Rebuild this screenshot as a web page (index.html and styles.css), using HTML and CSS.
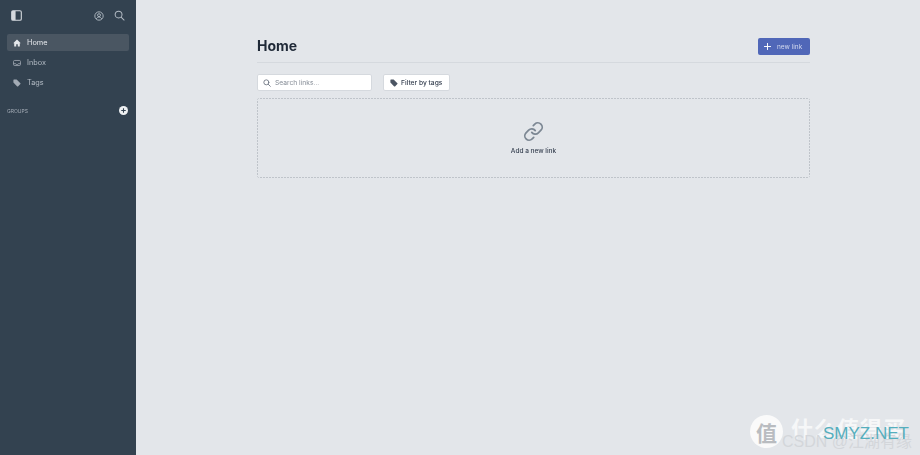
FILE: index.html
```html
<!DOCTYPE html>
<html lang="en">
<head>
    <meta charset="UTF-8">
    <meta name="viewport" content="width=device-width, initial-scale=1.0">
    <title>Home</title>
    <link rel="stylesheet" href="styles.css">
</head>
<body>
    <aside class="sidebar">
        <div class="sidebar-top">
            <svg class="icon-panel" width="11" height="11" viewBox="0 0 12 12">
                <rect x="0.75" y="0.75" width="10.5" height="10.5" rx="1.5" fill="none" stroke="#d5d9de" stroke-width="1.2"/>
                <path d="M1 1h4v10H1z" fill="#d5d9de"/>
            </svg>
            <div class="top-actions">
                <svg width="10" height="10" viewBox="0 0 24 24" fill="none" stroke="#b4bcc5" stroke-width="2.2">
                    <circle cx="12" cy="12" r="10"/>
                    <circle cx="12" cy="10" r="3.5"/>
                    <path d="M5.5 19c1.500-3 3.800-4.500 6.500-4.500s5 1.500 6.500 4.500"/>
                </svg>
                <svg width="11" height="11" viewBox="0 0 24 24" fill="none" stroke="#b4bcc5" stroke-width="2.2" stroke-linecap="round">
                    <circle cx="10" cy="10" r="7.500"/>
                    <path d="M16 16l6 6"/>
                </svg>
            </div>
        </div>

        <nav class="nav">
            <a class="nav-item active">
                <svg width="8" height="8" viewBox="0 0 20 20" fill="#e5e8ec"><path d="M10 1.500L.5 10.500H3V18.500h5v-5.500h4v5.500h5V10.500h2.500z"/></svg>
                Home
            </a>
            <a class="nav-item">
                <svg width="8" height="8" viewBox="0 0 22 20" fill="none" stroke="#a3abb5" stroke-width="2.200"><rect x="1.500" y="3" width="19" height="14" rx="3"/><path d="M1.500 12h6l1.500 2h4l1.500-2h6"/></svg>
                Inbox
            </a>
            <a class="nav-item">
                <svg width="8" height="8" viewBox="0 0 20 20" fill="#a3abb5"><path d="M1 2.500A1.500 1.500 0 0 1 2.500 1H9l9.500 9.500a1.500 1.500 0 0 1 0 2L12.500 18.500a1.500 1.500 0 0 1-2 0L1 9z"/></svg>
                Tags
            </a>
        </nav>

        <div class="groups">
            <span class="groups-title">GROUPS</span>
            <svg width="9" height="9" viewBox="0 0 20 20"><circle cx="10" cy="10" r="10" fill="#eef0f2"/><path d="M10 5v10M5 10h10" stroke="#334250" stroke-width="2.400"/></svg>
        </div>
    </aside>

    <main class="main">
        <div class="content">
            <header class="page-head">
                <h1>Home</h1>
                <button class="btn-new">
                    <svg width="7" height="7" viewBox="0 0 16 16"><path d="M8 1v14M1 8h14" stroke="#fff" stroke-width="2.200" stroke-linecap="round"/></svg>
                    new link
                </button>
            </header>

            <div class="toolbar">
                <div class="search">
                    <svg width="8" height="8" viewBox="0 0 24 24" fill="none" stroke="#6b7280" stroke-width="2.600" stroke-linecap="round"><circle cx="10" cy="10" r="7.500"/><path d="M16 16l6 6"/></svg>
                    <span>Search links...</span>
                </div>
                <button class="btn-filter">
                    <svg width="8" height="8" viewBox="0 0 20 20" fill="#4b5563"><path d="M1 2.500A1.500 1.500 0 0 1 2.500 1H9l9.500 9.500a1.500 1.500 0 0 1 0 2L12.500 18.500a1.500 1.500 0 0 1-2 0L1 9z"/></svg>
                    Filter by tags
                </button>
            </div>

            <div class="empty">
                <svg width="21" height="21" viewBox="0 0 24 24" fill="none" stroke="#7c8793" stroke-width="2" stroke-linecap="round" stroke-linejoin="round">
                    <path d="M10 13a5 5 0 0 0 7.540.54l3-3a5 5 0 0 0-7.070-7.070l-1.720 1.710"/>
                    <path d="M14 11a5 5 0 0 0-7.540-.54l-3 3a5 5 0 0 0 7.070 7.070l1.710-1.710"/>
                </svg>
                <span>Add a new link</span>
            </div>
        </div>
    </main>

    <div class="watermark">
        <span class="wm-badge">值</span>
        <span class="wm-text">什么值得买</span>
        <span class="wm-csdn">CSDN @江湖有缘</span>
        <span class="wm-smyz">SMYZ.NET</span>
    </div>
</body>
</html>
```

FILE: styles.css
```css
* {
    box-sizing: border-box;
}

body {
    margin: 0;
    height: 455px;
    display: flex;
    overflow: hidden;
    background-color: #e3e6ea;
    font-family: Inter, "Liberation Sans", sans-serif;
    color: #1f2937;
}

/* Sidebar */
.sidebar {
    width: 136px;
    flex-shrink: 0;
    background-color: #334250;
    padding: 9px 11px 0 7px;
}

.sidebar-top {
    height: 13px;
    display: flex;
    align-items: center;
    justify-content: space-between;
    padding: 0 0 0 4px;
    filter: blur(0.3px);
}

.top-actions {
    display: flex;
    align-items: center;
    gap: 10px;
}

.nav {
    margin: 12px -4px 0 0;
    display: flex;
    flex-direction: column;
    gap: 3px;
}

.nav-item {
    height: 17px;
    display: flex;
    align-items: center;
    gap: 6px;
    padding-left: 6px;
    border-radius: 2px;
    font-size: 7.300px;
    color: #b4bcc5;
    filter: blur(0.3px);
}

.nav-item.active {
    background-color: #4a5662;
    color: #e5e8ec;
}

.groups {
    margin: 15px -3px 0 0;
    display: flex;
    align-items: center;
    justify-content: space-between;
    filter: blur(0.3px);
}

.groups-title {
    font-size: 5px;
    color: #a3abb5;
}

/* Main */
.main {
    flex: 1;
    padding: 38px 0 0 121px;
}

.content {
    width: 553px;
    filter: blur(0.3px);
}

.page-head {
    height: 25px;
    display: flex;
    align-items: flex-start;
    justify-content: space-between;
    border-bottom: 1px solid #d5d9de;
}

h1 {
    margin: 0;
    font-size: 14px;
    line-height: 16px;
    font-weight: 700;
}

.btn-new {
    width: 52px;
    height: 17px;
    display: flex;
    align-items: center;
    gap: 6px;
    padding: 0 0 0 6px;
    border: none;
    border-radius: 2px;
    background-color: #5067b8;
    color: #d3d9ee;
    font-family: inherit;
    font-size: 6.500px;
}

.toolbar {
    margin-top: 11px;
    display: flex;
    gap: 11px;
}

.search,
.btn-filter {
    height: 17px;
    display: flex;
    align-items: center;
    background-color: #fff;
    border: 1px solid #d5d9de;
    border-radius: 2px;
    font-family: inherit;
    font-size: 6.700px;
}

.search {
    width: 115px;
    gap: 4px;
    padding-left: 5px;
    color: #858c96;
}

.btn-filter {
    width: 67px;
    gap: 3px;
    padding: 0 0 0 6px;
    font-weight: 500;
    color: #374151;
}

/* Fine dotted outline, finer than a 1px dashed border draws */
.empty {
    margin-top: 7px;
    height: 80px;
    display: flex;
    flex-direction: column;
    align-items: center;
    gap: 5px;
    padding-top: 23px;
    border-radius: 3px;
    font-size: 6.500px;
    font-weight: 500;
    color: #374151;
    background:
        repeating-linear-gradient(90deg, #bfc4ca 0 2px, transparent 2px 3px) top / 100% 1px no-repeat,
        repeating-linear-gradient(90deg, #bfc4ca 0 2px, transparent 2px 3px) bottom / 100% 1px no-repeat,
        repeating-linear-gradient(0deg, #bfc4ca 0 2px, transparent 2px 3px) left / 1px 100% no-repeat,
        repeating-linear-gradient(0deg, #bfc4ca 0 2px, transparent 2px 3px) right / 1px 100% no-repeat;
}

/* Watermark over the page corner */
.watermark {
    position: absolute;
    left: 750px;
    top: 410px;
    width: 170px;
    height: 45px;
}

.wm-badge {
    position: absolute;
    left: 0;
    top: 5px;
    width: 33px;
    height: 33px;
    display: flex;
    align-items: center;
    justify-content: center;
    border-radius: 50%;
    background-color: #fafafa;
    color: #b9bcc0;
    font-family: "Noto Sans CJK SC", sans-serif;
    font-size: 21px;
    font-weight: 700;
}

.wm-text {
    position: absolute;
    left: 41px;
    top: 1px;
    font-family: "Noto Sans CJK SC", sans-serif;
    font-size: 22px;
    font-weight: 700;
    line-height: 33px;
    letter-spacing: 1px;
    color: #f6f7f8;
    white-space: nowrap;
}

.wm-csdn {
    position: absolute;
    left: 32px;
    top: 23px;
    font-family: "Liberation Sans", "Noto Sans CJK SC", sans-serif;
    font-size: 16px;
    line-height: 18px;
    color: #d3d6da;
    white-space: nowrap;
}

.wm-smyz {
    position: absolute;
    left: 73px;
    top: 14px;
    font-family: "Liberation Sans", sans-serif;
    font-size: 17px;
    line-height: 20px;
    color: #55aebd;
    white-space: nowrap;
}
```
